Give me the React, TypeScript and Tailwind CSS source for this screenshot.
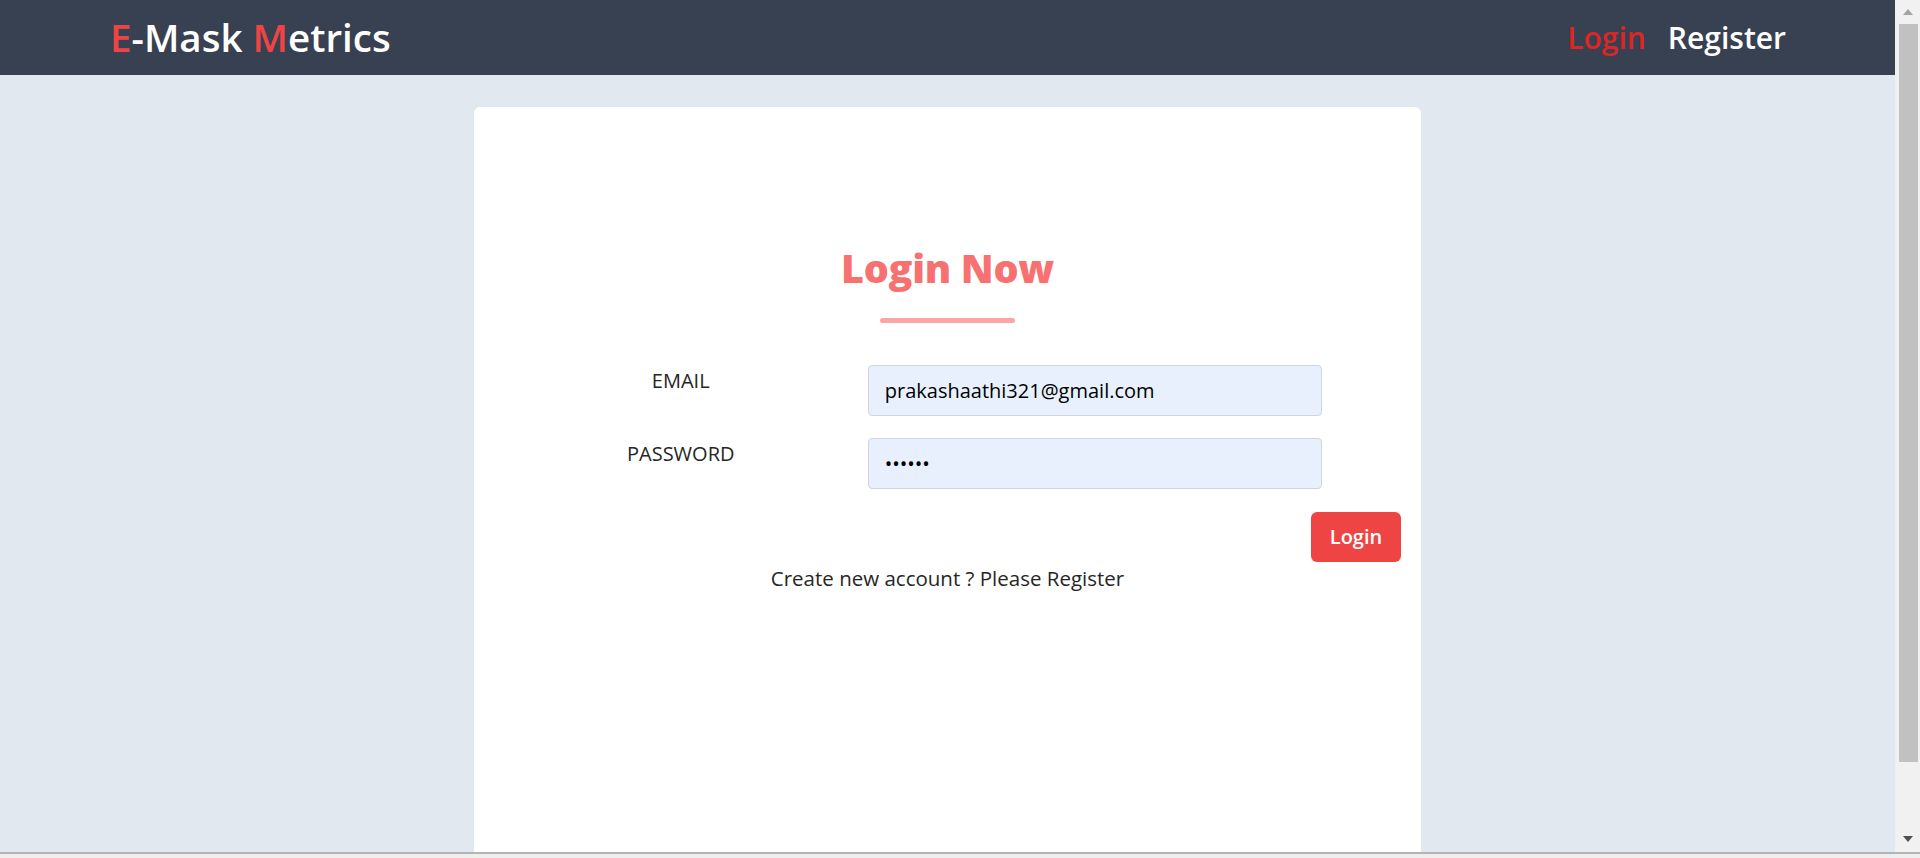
import { useState } from "react";

const bodyFont = { fontFamily: "'Open Sans', 'Noto Sans', sans-serif" };

export default function App() {
  const [email, setEmail] = useState("prakashaathi321@gmail.com");
  const [password, setPassword] = useState("secret");

  return (
    <div
      className="flex h-screen w-full flex-col overflow-hidden bg-[#efefef]"
      style={bodyFont}
    >
      <div className="flex h-[852px] w-full">
        <div className="flex h-full flex-1 flex-col overflow-hidden bg-[#e2e8f0]">
          <header className="flex h-[75px] shrink-0 items-center justify-between bg-[#374151] pl-[110px] pr-[109px]">
            <a href="#" className="text-[38.5px] font-semibold leading-none text-white">
              <span className="text-[#ef4444]">E</span>-Mask{" "}
              <span className="text-[#ef4444]">M</span>etrics
            </a>
            <nav className="flex items-center gap-[22px] text-[30px] font-semibold leading-none">
              <a href="#" className="text-[#dc2626]">
                Login
              </a>
              <a href="#" className="text-white">
                Register
              </a>
            </nav>
          </header>

          <main className="flex flex-1 justify-center pt-8">
            <section className="h-[800px] w-1/2 shrink-0 rounded-md bg-white px-5 pt-[137px]">
              <h1 className="text-center text-[39.5px] font-extrabold leading-[48px] tracking-[-0.3px] text-[#f87171]">
                Login Now
              </h1>
              <div className="mx-auto mt-[26px] h-[5px] w-[135px] rounded-full bg-[#fca5a5]" />

              <form
                onSubmit={(e) => e.preventDefault()}
                className="mt-[42px] flex flex-col"
              >
                <div className="flex flex-col gap-[22px]">
                  <Row label="EMAIL" htmlFor="email">
                    <input
                      id="email"
                      type="email"
                      value={email}
                      onChange={(e) => setEmail(e.target.value)}
                      className="h-[51px] w-full rounded border border-[#cfd6e0] bg-[#e8f0fe] px-4 text-[20px] text-black outline-none"
                    />
                  </Row>
                  <Row label="PASSWORD" htmlFor="password">
                    <input
                      id="password"
                      type="password"
                      value={password}
                      onChange={(e) => setPassword(e.target.value)}
                      className="h-[51px] w-full rounded border border-[#cfd6e0] bg-[#e8f0fe] px-4 text-[20px] text-black outline-none"
                    />
                  </Row>
                </div>

                <div className="mt-[23px] flex justify-end">
                  <button
                    type="submit"
                    className="h-[50px] rounded-md bg-[#ef4444] px-[19px] text-[20px] font-semibold text-white"
                  >
                    Login
                  </button>
                </div>
                <p className="mt-0.5 text-center text-[20.5px] leading-7 text-[#262626]">
                  Create new account ? Please Register
                </p>
              </form>
            </section>
          </main>
        </div>

        {/* fake window scrollbar */}
        <div className="flex h-full w-[25px] shrink-0 flex-col bg-[#f1f1f1]">
          <div className="flex h-[24px] items-center justify-center">
            <svg width="10" height="6" viewBox="0 0 10 6">
              <polygon points="5,0 10,6 0,6" fill="#a3a3a3" />
            </svg>
          </div>
          <div className="ml-[4px] mr-[2px] h-[738px] bg-[#c1c1c1]" />
          <div className="flex-1" />
          <div className="flex h-[26px] items-center justify-center">
            <svg width="10" height="6" viewBox="0 0 10 6">
              <polygon points="0,0 10,0 5,6" fill="#505050" />
            </svg>
          </div>
        </div>
      </div>
      <div className="h-[2px] w-full bg-[#b4b4b4]" />
      <div className="flex-1 bg-[#efefef]" />
    </div>
  );
}

function Row({
  label,
  htmlFor,
  children,
}: {
  label: string;
  htmlFor: string;
  children: React.ReactNode;
}) {
  return (
    <div className="flex items-start">
      <label
        htmlFor={htmlFor}
        className="mt-[2px] w-[374px] shrink-0 text-center text-[20px] leading-7 text-[#262626]"
      >
        {label}
      </label>
      <div className="w-[454px] shrink-0">{children}</div>
    </div>
  );
}
